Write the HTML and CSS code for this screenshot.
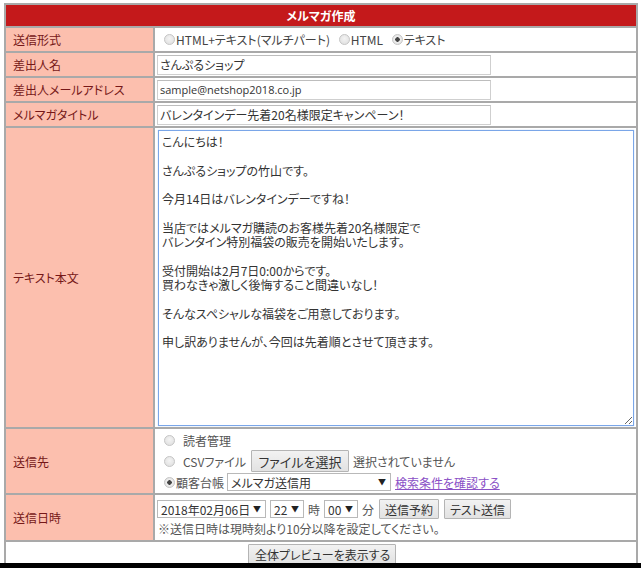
FILE: index.html
```html
<!DOCTYPE html>
<html lang="ja">
<head>
<meta charset="utf-8">
<title>メルマガ作成</title>
<link rel="stylesheet" href="styles.css">
</head>
<body>
<form class="mail-form">
<table class="form-table">
  <colgroup><col class="col-label"><col class="col-value"></colgroup>
  <tr><th colspan="2" class="title">メルマガ作成</th></tr>
  <tr>
    <th class="label">送信形式</th>
    <td class="value row-std">
      <label class="radio-opt"><input type="radio" name="fmt" class="radio">HTML+テキスト(マルチパート)</label>
      <label class="radio-opt"><input type="radio" name="fmt" class="radio">HTML</label>
      <label class="radio-opt"><input type="radio" name="fmt" class="radio" checked>テキスト</label>
    </td>
  </tr>
  <tr>
    <th class="label">差出人名</th>
    <td class="value row-std"><input type="text" class="text-input" value="さんぷるショップ"></td>
  </tr>
  <tr>
    <th class="label">差出人メールアドレス</th>
    <td class="value row-std"><input type="text" class="text-input latin" value="sample@netshop2018.co.jp"></td>
  </tr>
  <tr>
    <th class="label">メルマガタイトル</th>
    <td class="value row-std"><input type="text" class="text-input" value="バレンタインデー先着20名様限定キャンペーン！"></td>
  </tr>
  <tr>
    <th class="label">テキスト本文</th>
    <td class="value row-body"><textarea class="body-text">こんにちは！

さんぷるショップの竹山です。

今月14日はバレンタインデーですね！

当店ではメルマガ購読のお客様先着20名様限定で
バレンタイン特別福袋の販売を開始いたします。

受付開始は2月7日0:00からです。
買わなきゃ激しく後悔すること間違いなし！

そんなスペシャルな福袋をご用意しております。

申し訳ありませんが、今回は先着順とさせて頂きます。</textarea></td>
  </tr>
  <tr>
    <th class="label">送信先</th>
    <td class="value row-dest">
      <div class="dest-line"><input type="radio" name="dest" class="radio"><span class="dest-text spaced">読者管理</span></div>
      <div class="dest-line"><input type="radio" name="dest" class="radio"><span class="dest-text spaced">CSVファイル</span><button type="button" class="btn btn-file">ファイルを選択</button><span class="muted">選択されていません</span></div>
      <div class="dest-line"><input type="radio" name="dest" class="radio" checked><span class="dest-text">顧客台帳</span><span class="select select-list">メルマガ送信用<span class="arrow">▼</span></span><a href="#" class="link">検索条件を確認する</a></div>
    </td>
  </tr>
  <tr>
    <th class="label">送信日時</th>
    <td class="value row-date">
      <div class="date-line">
        <span class="select select-date">2018年02月06日<span class="arrow">▼</span></span>
        <span class="select select-num">22<span class="arrow">▼</span></span>
        <span class="unit">時</span>
        <span class="select select-num">00<span class="arrow">▼</span></span>
        <span class="unit">分</span>
        <button type="button" class="btn btn-small">送信予約</button>
        <button type="button" class="btn btn-small">テスト送信</button>
      </div>
      <div class="note">※送信日時は現時刻より10分以降を設定してください。</div>
    </td>
  </tr>
  <tr>
    <td colspan="2" class="value row-preview"><button type="button" class="btn btn-preview">全体プレビューを表示する</button></td>
  </tr>
</table>
</form>
<div class="screen-edge"></div>
</body>
</html>
```

FILE: styles.css
```css
html, body {
  margin: 0;
  padding: 0;
  background: #ffffff;
}
body {
  font-family: "Noto Sans CJK JP", "Noto Sans", sans-serif;
  font-size: 12px;
  color: #333333;
  font-feature-settings: "palt";
}
.mail-form {
  margin: 0;
  padding: 3px 0 0 4px;
}
.form-table {
  width: 634px;
  border-collapse: collapse;
  border: 2px solid #a9a9a9;
  table-layout: fixed;
}
.col-label {
  width: 149px;
}
.form-table th,
.form-table td {
  border: 2px solid #a9a9a9;
  padding: 0;
  vertical-align: middle;
}
.title {
  height: 21px;
  background: #c4191b;
  color: #ffffff;
  font-weight: bold;
  font-size: 12px;
  text-align: center;
  line-height: 21px;
}
.label {
  background: #fcbfae;
  color: #761818;
  font-weight: normal;
  text-align: left;
  padding-left: 7px !important;
  font-size: 12px;
}
.value {
  background: #ffffff;
  padding-left: 2px !important;
}
.row-std {
  height: 23px;
}
.radio-opt {
  display: inline-flex;
  align-items: center;
  color: #444;
}
.radio-opt:first-child {
  margin-left: 2px;
}
.radio-opt + .radio-opt .radio {
  margin-left: 6px;
}
.radio {
  appearance: none;
  -webkit-appearance: none;
  width: 11px;
  height: 11px;
  margin: 0 1px 0 5px;
  border-radius: 50%;
  border: 1px solid #c6c6c6;
  background: radial-gradient(circle at 50% 40%, #f4f4f4 0%, #dcdcdc 100%);
  box-sizing: border-box;
  flex: none;
}
.radio:checked {
  background: radial-gradient(circle, #444 0 2px, #f0f0f0 2.5px, #d8d8d8 100%);
}
.text-input {
  width: 334px;
  height: 20px;
  box-sizing: border-box;
  border: 1px solid #cfcfcf;
  border-top-color: #bdbdbd;
  padding: 0 2px;
  margin: 0;
  font-family: inherit;
  font-size: 12px;
  font-feature-settings: "palt";
  color: #333;
  display: block;
}
.text-input.latin {
  font-family: "Open Sans", "Noto Sans", sans-serif;
  font-size: 11px;
}
.row-body {
  height: 298px;
  padding-top: 1px !important;
}
.body-text {
  display: block;
  width: 476px;
  height: 296px;
  box-sizing: border-box;
  margin: 0 0 0 1px;
  border: 1px solid #7aa6e8;
  box-shadow: 0 0 1px #a9c8f2;
  padding: 4px 3px 1px;
  font-family: inherit;
  font-size: 12px;
  line-height: 14.3px;
  font-feature-settings: "palt";
  color: #333;
  resize: both;
  outline: none;
}
.row-dest {
  height: 64px;
}
.dest-line {
  display: flex;
  align-items: center;
  height: 21px;
  color: #555;
  white-space: nowrap;
}
.dest-line > * {
  flex: none;
}
.dest-line .radio {
  margin-left: 7px;
}
.dest-text.spaced {
  margin-left: 7px;
}
.btn {
  font-family: inherit;
  font-feature-settings: "palt";
  background: linear-gradient(#f2f2f2, #e2e2e2);
  border: 1px solid #b4b4b4;
  border-radius: 1px;
  color: #333;
  padding: 0 6px;
  margin: 0;
  box-sizing: border-box;
  white-space: nowrap;
}
.btn-file {
  height: 22px;
  font-size: 13px;
  margin-left: 5px;
  margin-right: 4px;
  width: 98px;
}
.muted {
  color: #555;
}
.select {
  position: relative;
  display: inline-flex;
  align-items: center;
  box-sizing: border-box;
  height: 18px;
  border: 1px solid #b9b9b9;
  background: #fff;
  padding-left: 3px;
  color: #333;
  white-space: nowrap;
}
.arrow {
  position: absolute;
  right: 4px;
  top: 0;
  font-size: 8px;
  line-height: 16px;
  color: #222;
}
.select-list {
  width: 164px;
  margin-left: 3px;
  margin-right: 4px;
}
.link {
  color: #8a4fc6;
  text-decoration: underline;
}
.row-date {
  height: 45px;
}
.date-line {
  display: flex;
  align-items: center;
  height: 22px;
  gap: 4px;
  margin-top: 1px;
  white-space: nowrap;
}
.date-line > * {
  flex: none;
}
.select-date {
  width: 109px;
}
.select-num {
  width: 34px;
}
.unit {
  color: #555;
}
.btn-small {
  height: 20px;
  font-size: 12px;
  padding: 0 5px;
  margin-left: 1px;
}
.note {
  color: #555;
  line-height: 18px;
  padding-left: 1px;
}
.row-preview {
  height: 22px;
  text-align: center;
}
.btn-preview {
  height: 20px;
  font-size: 12px;
  width: 148px;
  margin-top: 2px;
}
.screen-edge {
  position: fixed;
  left: 0;
  right: 0;
  bottom: 0;
  height: 5px;
  background: #000;
}
```
